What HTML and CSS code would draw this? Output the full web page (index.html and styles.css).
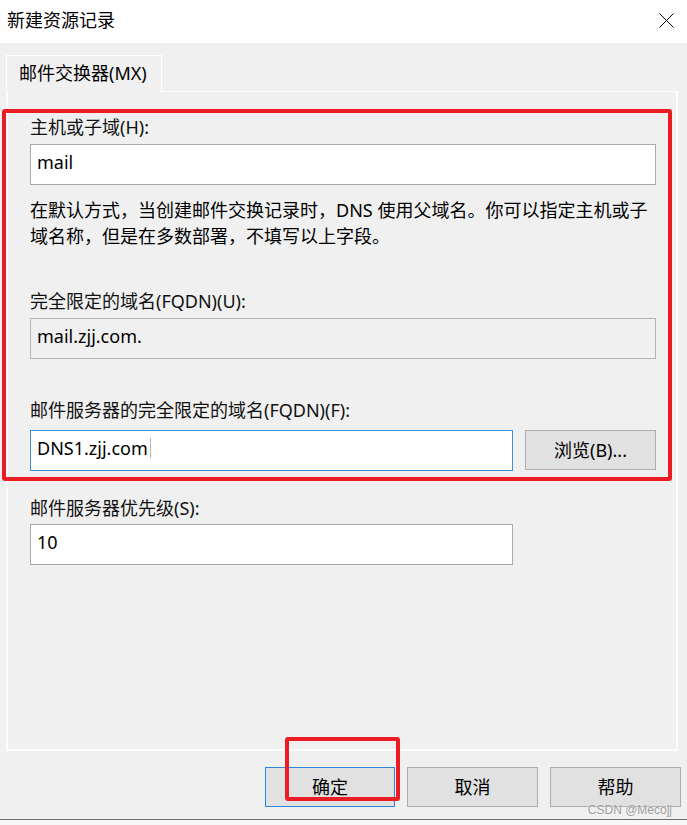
FILE: index.html
```html
<!DOCTYPE html>
<html lang="zh-CN">
<head>
    <meta charset="UTF-8">
    <meta name="viewport" content="width=device-width, initial-scale=1.0">
    <title>新建资源记录</title>
    <link rel="stylesheet" href="styles.css">
</head>
<body>
    <!-- 标题栏 -->
    <div class="titlebar">
        <span class="title">新建资源记录</span>
        <svg class="close" width="15" height="15" viewBox="0 0 15 15">
            <path d="M0.5 0.5 L14.5 14.5 M14.5 0.5 L0.5 14.5" stroke="#000" stroke-width="1" fill="none"/>
        </svg>
    </div>

    <div class="dialog">
        <div class="tabs">
            <div class="tab">邮件交换器(MX)</div>
        </div>

        <div class="panel">
            <!-- 红框标注的区域 -->
            <div class="mark-box">
                <div class="label">主机或子域(H):</div>
                <div class="field">mail</div>

                <p class="hint">在默认方式，当创建邮件交换记录时，DNS 使用父域名。你可以指定主机或子<br>域名称，但是在多数部署，不填写以上字段。</p>

                <div class="label gap-big">完全限定的域名(FQDN)(U):</div>
                <div class="field readonly">mail.zjj.com.</div>

                <div class="label gap-big2">邮件服务器的完全限定的域名(FQDN)(F):</div>
                <div class="field-row">
                    <div class="field short focused">DNS1.zjj.com<span class="caret"></span></div>
                    <button class="btn browse">浏览(B)...</button>
                </div>
            </div>

            <div class="priority">
                <div class="label">邮件服务器优先级(S):</div>
                <div class="field short">10</div>
            </div>
        </div>

        <div class="footer">
            <div class="ok-wrap">
                <button class="btn ok">确定</button>
                <span class="mark-ok"></span>
            </div>
            <button class="btn">取消</button>
            <button class="btn">帮助</button>
            <span class="watermark">CSDN @Mecojj</span>
        </div>
    </div>
</body>
</html>
```

FILE: styles.css
```css
* {
    box-sizing: border-box;
}

body {
    margin: 0;
    width: 687px;
    height: 825px;
    background-color: #f7f7f7;
    font-family: "Noto Sans", "Noto Sans CJK SC", sans-serif;
    font-size: 18px;
    color: #000;
    overflow: hidden;
}

.titlebar {
    height: 43px;
    background-color: #fff;
    display: flex;
    align-items: center;
    justify-content: space-between;
    padding: 0 13px 3px 7px;
}

.title {
    line-height: 22px;
}

.dialog {
    height: 777px;
    background-color: #f0f0f0;
    border-bottom: 1px solid #6b6b6b;
    padding: 12px 9px 0 6px;
    position: relative;
}

.tabs {
    display: flex;
}

.tab {
    width: 156px;
    height: 37px;
    border: 1px solid #fff;
    border-bottom: none;
    background-color: #f0f0f0;
    padding-left: 12px;
    line-height: 34px;
    position: relative;
    margin-bottom: -1px;
    z-index: 1;
}

.panel {
    height: 660px;
    border: 2px solid #fcfcfc;
    border-top-width: 1px;
}

.mark-box {
    margin: 17px 0 0 -6px;
    width: 670px;
    border: 4px solid #ec1c24;
    border-radius: 3px;
    padding: 3px 0 6px 24px;
}

.label {
    line-height: 22px;
    margin-bottom: 6px;
    color: #111;
}

.gap-big {
    margin-top: 41px;
}

.gap-big2 {
    margin-top: 40px;
    margin-bottom: 9px;
}

.field {
    width: 626px;
    height: 41px;
    background-color: #fff;
    border: 1px solid #a9a9a9;
    padding: 0 6px 5px;
    display: flex;
    align-items: center;
}

.field.readonly {
    background-color: #f0f0f0;
    border-color: #b4b4b4;
}

.field.short {
    width: 483px;
}

.field.focused {
    border-color: #3d8fd8;
}

.caret {
    display: inline-block;
    width: 1px;
    height: 20px;
    background-color: #b8b8b8;
    margin-left: 2px;
}

.hint {
    margin: 12px 0 0;
    line-height: 26px;
}

.field-row {
    display: flex;
    gap: 12px;
}

.btn {
    font-family: inherit;
    font-size: 18px;
    color: #000;
    background-color: #e1e1e1;
    border: 1px solid #adadad;
    height: 40px;
    padding: 0;
    line-height: 20px;
}

.browse {
    width: 131px;
}

.priority {
    padding: 16px 0 0 22px;
}

.priority .label {
    margin-bottom: 5px;
}

.footer {
    display: flex;
    justify-content: flex-end;
    gap: 12px;
    margin-top: 16px;
    margin-right: -3px;
}

.footer .btn {
    width: 131px;
}

.ok-wrap {
    position: relative;
}

.footer .btn.ok {
    width: 130px;
    border-color: #2a85db;
}

.mark-ok {
    position: absolute;
    left: 20px;
    top: -30px;
    width: 115px;
    height: 64px;
    border: 4px solid #ec1c24;
    border-radius: 3px;
}

.watermark {
    position: absolute;
    right: 15px;
    bottom: 2px;
    font-family: "Liberation Sans", sans-serif;
    font-size: 12px;
    color: #9c9c9c;
    text-shadow: 0 0 2px #fff;
}
```
